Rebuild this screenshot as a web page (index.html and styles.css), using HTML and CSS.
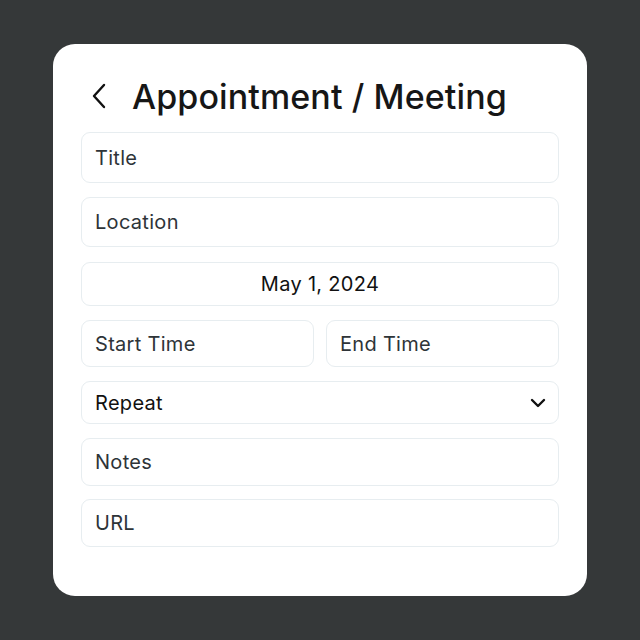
FILE: index.html
```html
<!DOCTYPE html>
<html>
<head>
<meta charset="utf-8">
<link rel="stylesheet" href="styles.css">
</head>
<body>
<div class="card">
  <div class="header">
    <svg class="back" width="16" height="26" viewBox="0 0 16 26"><path d="M13 2 L3 13 L13 24" fill="none" stroke="#111" stroke-width="2.4" stroke-linecap="round" stroke-linejoin="round"/></svg>
    <h1>Appointment / Meeting</h1>
  </div>
  <div class="form">
    <div class="field h51">Title</div>
    <div class="field h50">Location</div>
    <div class="field h44 center dark date">May 1, 2024</div>
    <div class="row">
      <div class="field h47 time">Start Time</div>
      <div class="field h47 time">End Time</div>
    </div>
    <div class="field h43 select dark">
      <span>Repeat</span>
      <svg width="16" height="10" viewBox="0 0 16 10"><path d="M2 2 L8 8 L14 2" fill="none" stroke="#111" stroke-width="2.4" stroke-linecap="round" stroke-linejoin="round"/></svg>
    </div>
    <div class="field h48">Notes</div>
    <div class="field h48 last">URL</div>
  </div>
</div>
</body>
</html>
```
FILE: styles.css
```css
* { box-sizing: border-box; }
html, body { margin: 0; }
body {
  width: 640px;
  height: 640px;
  background: #353839;
  padding: 44px 53px;
  font-family: Inter, "Noto Sans", sans-serif;
}
.card {
  width: 534px;
  height: 552px;
  background: #fff;
  border-radius: 22px;
  padding: 30px 28px 0 28px;
}
.header {
  display: flex;
  align-items: center;
  height: 44px;
  margin-bottom: 14px;
}
.back {
  margin-left: 10px;
  margin-right: 25px;
}
h1 {
  margin: 0;
  font-size: 34px;
  font-weight: 500;
  color: #161616;
  letter-spacing: 0.1px;
}
.form {
  display: flex;
  flex-direction: column;
  gap: 14px;
}
.field {
  border: 1px solid #e7edf0;
  border-radius: 9px;
  display: flex;
  align-items: center;
  padding: 0 13px;
  font-size: 20px;
  letter-spacing: 0.3px;
  color: #2e3438;
}
.h51 { height: 51px; }
.h50 { height: 50px; }
.h48 { height: 48px; }
.h47 { height: 47px; }
.h44 { height: 44px; }
.h43 { height: 43px; }
.date { margin-top: 1px; }
.last { margin-top: -1px; }
.time { flex: 1; }
.center { justify-content: center; }
.dark { color: #111; }
.select { justify-content: space-between; }
.select svg { margin-right: -1px; }
.row {
  display: flex;
  gap: 12px;
}
```
